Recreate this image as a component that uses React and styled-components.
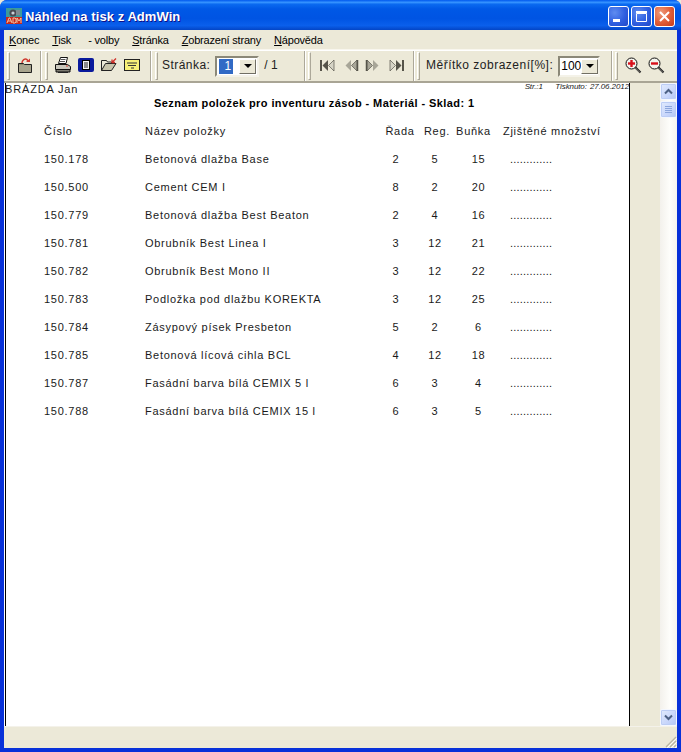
import React from 'react';
import styled, { createGlobalStyle } from 'styled-components';

const GlobalStyle = createGlobalStyle`
    html, body {
        margin: 0;
        padding: 0;
        background: #ece9d8;
    }
    #root {
        width: 681px;
        height: 752px;
    }
`;

const Window = styled.div`
    box-sizing: border-box;
    width: 681px;
    height: 752px;
    display: flex;
    flex-direction: column;
    overflow: hidden;
    background: #0831d9;
    border-radius: 7px 7px 0 0;
    font-family: "Liberation Sans", Arial, sans-serif;
`;

const TitleBar = styled.div`
    flex: none;
    height: 30px;
    box-sizing: border-box;
    padding: 2px 6px 0 6px;
    display: flex;
    align-items: center;
    gap: 3px;
    background: linear-gradient(180deg, #0058ee 0%, #3593ff 8%, #0a6af0 14%, #0058e6 30%, #0054e3 62%, #0a5fec 85%, #0345c6 100%);
`;

const TitleText = styled.div`
    flex: 1;
    font-size: 13px;
    font-weight: bold;
    letter-spacing: 0.06px;
    color: #ffffff;
    text-shadow: 1px 1px 0 #0f1089;
    white-space: nowrap;
`;

const CaptionButton = styled.div`
    box-sizing: border-box;
    width: 21px;
    height: 21px;
    margin-left: -1px;
    margin-top: 1px;
    border: 1px solid #ffffff;
    border-radius: 3px;
    display: flex;
    align-items: center;
    justify-content: center;
    background: ${p => p.$close
        ? 'radial-gradient(circle at 30% 30%, #ee9c7c 0%, #e2603a 50%, #c43a18 100%)'
        : 'radial-gradient(circle at 30% 30%, #5f8cf0 0%, #2f5fe0 55%, #2048c8 100%)'};
`;

const Body = styled.div`
    flex: 1;
    min-height: 0;
    margin: 0 4px 4px;
    display: flex;
    flex-direction: column;
    background: #ece9d8;
`;

const MenuBar = styled.div`
    flex: none;
    box-sizing: border-box;
    height: 20px;
    display: flex;
    align-items: center;
    padding-left: 5px;
    font-size: 11px;
    letter-spacing: -0.2px;
    color: #000000;
    border-bottom: 1px solid #f8f6ee;
`;

const MenuItem = styled.span`
    margin-right: ${p => p.$gap}px;
    white-space: nowrap;
    u {
        text-underline-offset: 1px;
    }
`;

const ToolBar = styled.div`
    flex: none;
    height: 33px;
    box-sizing: border-box;
    display: flex;
    align-items: center;
    font-size: 12px;
    color: #222222;
    border-bottom: 2px solid #a9a595;
    border-top: 1px solid #ffffff;
`;

const Group = styled.div`
    box-sizing: border-box;
    height: 30px;
    width: ${p => p.$width}px;
    flex: none;
    padding-left: ${p => p.$pad}px;
    display: flex;
    align-items: center;
    gap: ${p => p.$gap || 0}px;
    border-right: 1px solid #ffffff;
    box-shadow: inset -1px 0 0 #aca899;
    svg {
        margin-top: -2px;
    }
    &:last-child {
        border-right: none;
        box-shadow: none;
    }
`;

const Grip = styled.div`
    flex: none;
    box-sizing: border-box;
    width: 3px;
    height: 28px;
    margin-right: ${p => p.$after}px;
    border: 1px solid #aca899;
    border-left-color: #ffffff;
    border-top-color: #ffffff;
`;

const ToolLabel = styled.span`
    margin-top: -2px;
    letter-spacing: ${p => p.$spacing}px;
    margin-left: ${p => p.$left || 0}px;
    white-space: nowrap;
`;

const Spin = styled.div`
    box-sizing: border-box;
    flex: none;
    width: ${p => p.$width}px;
    height: 21px;
    margin-left: ${p => p.$left}px;
    display: flex;
    align-items: center;
    padding: 1px;
    background: #ffffff;
    border: 2px solid;
    border-color: #8b8878 #f4f2e8 #f4f2e8 #8b8878;
    font-size: 12px;
    letter-spacing: 0;
    color: #000000;
`;

const SpinValue = styled.span`
    flex: 1;
    padding: 0 0 0 ${p => p.$pad}px;
`;

const Selected = styled.span`
    display: block;
    width: 14px;
    height: 15px;
    line-height: 15px;
    text-align: right;
    padding-right: 2px;
    box-sizing: border-box;
    background: #316ac5;
    color: #ffffff;
`;

const SpinArrow = styled.div`
    flex: none;
    box-sizing: border-box;
    width: 17px;
    height: 15px;
    background: #ece9d8;
    border: 1px solid;
    border-color: #ffffff #716f64 #716f64 #ffffff;
    display: flex;
    align-items: center;
    justify-content: center;
    &::after {
        content: '';
        border-left: 4px solid transparent;
        border-right: 4px solid transparent;
        border-top: 4px solid #000000;
    }
`;

const Main = styled.div`
    flex: 1;
    min-height: 0;
    display: flex;
`;

const Page = styled.div`
    box-sizing: border-box;
    width: 625px;
    margin-left: 1px;
    flex: none;
    background: #ffffff;
    border-left: 1px solid #000000;
    border-right: 1px solid #000000;
    box-shadow: -1px 0 0 #ffffff;
    font-size: 11px;
    letter-spacing: 0.72px;
    color: #1a1a1a;
`;

const PageTop = styled.div`
    height: 12px;
    display: flex;
    justify-content: space-between;
    line-height: 12px;
`;

const Author = styled.span`
    letter-spacing: 0.85px;
    margin-left: -1px;
`;

const Stamp = styled.span`
    font-size: 8px;
    font-style: italic;
    letter-spacing: -0.1px;
    word-spacing: 1px;
    white-space: pre;
    line-height: 8px;
`;

const Heading = styled.div`
    margin-top: 1px;
    height: 14px;
    line-height: 14px;
    padding-left: 148px;
    font-weight: bold;
    letter-spacing: 0.42px;
    color: #000000;
`;

const Table = styled.div`
    margin-top: 7px;
    display: grid;
    grid-template-columns: 38px 101px 231px 40px 38px 49px 1fr;
    grid-auto-rows: 28px;
    align-items: center;
`;

const Cell = styled.div`
    grid-column: ${p => p.$col};
    text-align: ${p => p.$center ? 'center' : 'left'};
    white-space: nowrap;
    margin-left: ${p => p.$shift || 0}px;
`;

const Dots = styled(Cell)`
    letter-spacing: 0.2px;
`;

const Side = styled.div`
    flex: 1;
    display: flex;
    justify-content: flex-end;
`;

const ScrollBar = styled.div`
    width: 17px;
    display: flex;
    flex-direction: column;
    background: linear-gradient(90deg, #f3f1ec 0%, #fefefb 60%, #f6f5ef 100%);
`;

const ScrollTrack = styled.div`
    flex: 1;
`;

const ScrollButton = styled.div`
    flex: none;
    box-sizing: border-box;
    width: 17px;
    height: 17px;
    display: flex;
    align-items: center;
    justify-content: center;
    border: 1px solid #f4f7fe;
    border-radius: 2px;
    background: linear-gradient(135deg, #e2ebfd 0%, #c8d6fb 60%, #b3c6f4 100%);
    box-shadow: inset 0 0 0 1px #bccdf5;
`;

const ScrollThumb = styled(ScrollButton)`
    height: 17px;
    margin-top: 1px;
    flex-direction: column;
    gap: 1px;
    i {
        display: block;
        width: 7px;
        height: 1px;
        background: #8ca6dc;
    }
`;

const StatusBar = styled.div`
    flex: none;
    height: 21px;
    border-top: 1px solid #f4f2ea;
    display: flex;
    justify-content: flex-end;
    align-items: flex-end;
`;

const rows = [
    ['150.178', 'Betonová dlažba Base', 2, 5, 15],
    ['150.500', 'Cement CEM I', 8, 2, 20],
    ['150.779', 'Betonová dlažba Best Beaton', 2, 4, 16],
    ['150.781', 'Obrubník Best Linea I', 3, 12, 21],
    ['150.782', 'Obrubník Best Mono II', 3, 12, 22],
    ['150.783', 'Podložka pod dlažbu KOREKTA', 3, 12, 25],
    ['150.784', 'Zásypový písek Presbeton', 5, 2, 6],
    ['150.785', 'Betonová lícová cihla BCL', 4, 12, 18],
    ['150.787', 'Fasádní barva bílá CEMIX 5 l', 6, 3, 4],
    ['150.788', 'Fasádní barva bílá CEMIX 15 l', 6, 3, 5],
];

const AppIcon = () => (
    <svg width="16" height="16" viewBox="0 0 16 16">
        <rect width="16" height="16" fill="#3c9a9c" />
        <circle cx="7" cy="5" r="3.6" fill="#4a4a52" />
        <circle cx="7" cy="5" r="1.6" fill="#c8d0d8" />
        <rect x="10" y="2" width="4" height="5" fill="#7f8a90" />
        <rect y="9" width="16" height="7" fill="#c8281c" />
        <path d="M1 15 3 10h1l2 5M2 13h3M7 10v5h2l1-1v-3l-1-1zM11 15v-5l2 3 2-3v5" fill="none" stroke="#f4d0b0" strokeWidth="0.9" />
    </svg>
);

const ExitIcon = () => (
    <svg width="16" height="16" viewBox="0 0 16 16">
        <path d="M1.5 6.5h5l1 1h7v8h-13z" fill="#8f8a72" stroke="#222" />
        <path d="M2 8h12v7H2z" fill="#a8a48e" />
        <path d="M5 6c0-3 3-5 5-3.500l1 2" fill="none" stroke="#d03a30" strokeWidth="1.5" />
        <path d="M9 5h4V1.500z" fill="#d03a30" />
    </svg>
);

const PrintIcon = () => (
    <svg width="16" height="16" viewBox="0 0 16 16">
        <path d="M5.500.5h7l-1.500 6H3.500z" fill="#fff" stroke="#111" />
        <path d="M5.500 2.500h5M5 4.500h5" stroke="#555" />
        <path d="M.5 7.500h12l3 2v3H.5z" fill="#c8c6bc" stroke="#111" />
        <path d="M1 12.500h14V15H1z" fill="#7c7a70" stroke="#111" />
        <path d="M3 15.500h10" stroke="#222" />
        <path d="M11 9h2" stroke="#d03a30" />
    </svg>
);

const PageIcon = () => (
    <svg width="16" height="14" viewBox="0 0 16 14">
        <rect x="0" y="0" width="16" height="14" rx="2" fill="#0a1a9c" />
        <rect x="4.500" y="2.500" width="7" height="9" fill="#f4f4f4" stroke="#000" />
        <path d="M6 5h4M6 7h4M6 9h4" stroke="#222" />
    </svg>
);

const OpenIcon = () => (
    <svg width="16" height="14" viewBox="0 0 16 14">
        <path d="M.5 2.500h5l1 1.500h4v2" fill="#ece9d8" stroke="#222" />
        <path d="M.5 2.500v10h10l4.500-7H4.500l-4 7" fill="#c8c4ac" stroke="#222" />
        <path d="M15 .5l-4 4M11 1.500v3h3" fill="none" stroke="#d0302a" strokeWidth="1.300" />
    </svg>
);

const NoteIcon = () => (
    <svg width="16" height="12" viewBox="0 0 16 12">
        <rect x="0.500" y="0.500" width="15" height="11" fill="#f8f078" stroke="#222" />
        <path d="M3 4h10M4 6.500h8M7 9h3" stroke="#333" />
    </svg>
);

const NavIcon = ({ flip, outer }) => (
    <svg width="17" height="13" viewBox="0 0 17 13" style={{ transform: flip ? 'scaleX(-1)' : 'none' }}>
        {outer && <path d="M2 1v11" stroke="#56544a" strokeWidth="2" />}
        <path d="M9 1 3.500 6.500 9 12z" fill={outer ? '#56544a' : '#a8a698'} />
        <path d="M15 1 9.500 6.500 15 12z" fill={outer ? '#d6d4c6' : '#a8a698'} stroke="#56544a" strokeWidth="0.700" />
        {!outer && <path d="M15.500 1v11" stroke="#56544a" strokeWidth="1.500" />}
    </svg>
);

const ZoomIcon = ({ minus }) => (
    <svg width="17" height="17" viewBox="0 0 17 17">
        <path d="M10 10l5.500 5.500" stroke="#222" strokeWidth="2.200" />
        <path d="M10.500 11l4.500 4.500" stroke="#b8b6a8" strokeWidth="0.700" />
        <circle cx="6.500" cy="6.500" r="5.500" fill="#f4f4ee" stroke="#111" />
        <rect x="3" y="5.300" width="7" height="2.400" fill="#d8101c" />
        {!minus && <rect x="5.300" y="3" width="2.400" height="7" fill="#d8101c" />}
    </svg>
);

const Chevron = ({ down }) => (
    <svg width="9" height="7" viewBox="0 0 9 7">
        <path d={down ? 'M1 1.500l3.500 3.500L8 1.500' : 'M1 5.500L4.500 2 8 5.500'} fill="none" stroke="#4d6185" strokeWidth="2" />
    </svg>
);

const SizeGrip = () => (
    <svg width="13" height="13" viewBox="0 0 13 13">
        <path d="M12 2 2 12M12 6l-6 6M12 10l-2 2" stroke="#b8b4a2" strokeWidth="1.200" />
        <path d="M13 3 3 13M13 7l-6 6M13 11l-2 2" stroke="#ffffff" strokeWidth="0.800" />
    </svg>
);

const App = () => (
    <Window>
        <GlobalStyle />
        <TitleBar>
            <AppIcon />
            <TitleText>Náhled na tisk z AdmWin</TitleText>
            <CaptionButton>
                <svg width="13" height="13" viewBox="0 0 13 13"><rect x="1" y="9" width="7" height="3" fill="#fff" /></svg>
            </CaptionButton>
            <CaptionButton>
                <svg width="13" height="13" viewBox="0 0 13 13"><path d="M1.500 3.500h10v8h-10z" fill="none" stroke="#fff" /><rect x="1" y="1" width="11" height="2" fill="#fff" /></svg>
            </CaptionButton>
            <CaptionButton $close>
                <svg width="13" height="13" viewBox="0 0 13 13"><path d="M2 2l9 9M11 2l-9 9" stroke="#fff" strokeWidth="2" /></svg>
            </CaptionButton>
        </TitleBar>
        <Body>
            <MenuBar>
                <MenuItem $gap={13}><u>K</u>onec</MenuItem>
                <MenuItem $gap={17}><u>T</u>isk</MenuItem>
                <MenuItem $gap={13}>- volby</MenuItem>
                <MenuItem $gap={13}><u>S</u>tránka</MenuItem>
                <MenuItem $gap={13}><u>Z</u>obrazení strany</MenuItem>
                <MenuItem $gap={0}><u>N</u>ápověda</MenuItem>
            </MenuBar>
            <ToolBar>
                <Group $width={38} $pad={3}>
                    <Grip $after={7} />
                    <ExitIcon />
                </Group>
                <Group $width={110} $pad={3} $gap={7}>
                    <Grip $after={0} />
                    <PrintIcon />
                    <PageIcon />
                    <OpenIcon />
                    <NoteIcon />
                </Group>
                <Group $width={154} $pad={3}>
                    <Grip $after={4} />
                    <ToolLabel $spacing={0.45}>Stránka:</ToolLabel>
                    <Spin $width={44} $left={5}>
                        <SpinValue $pad={1}><Selected>1</Selected></SpinValue>
                        <SpinArrow />
                    </Spin>
                    <ToolLabel $spacing={0} $left={5}>/ 1</ToolLabel>
                </Group>
                <Group $width={109} $pad={2} $gap={6}>
                    <Grip $after={2} />
                    <NavIcon outer />
                    <NavIcon />
                    <NavIcon flip />
                    <NavIcon flip outer />
                </Group>
                <Group $width={198} $pad={2}>
                    <Grip $after={6} />
                    <ToolLabel $spacing={0.5}>Měřítko zobrazení[%]:</ToolLabel>
                    <Spin $width={42} $left={5}>
                        <SpinValue $pad={0}>100</SpinValue>
                        <SpinArrow />
                    </Spin>
                </Group>
                <Group $width={60} $pad={2} $gap={6}>
                    <Grip $after={1} />
                    <ZoomIcon />
                    <ZoomIcon minus />
                </Group>
            </ToolBar>
            <Main>
                <Page>
                    <PageTop>
                        <Author>BRÁZDA Jan</Author>
                        <Stamp>{'Str.:1    Tisknuto: 27.06.2012'}</Stamp>
                    </PageTop>
                    <Heading>Seznam položek pro inventuru zásob - Materiál - Sklad: 1</Heading>
                    <Table>
                        <Cell $col={2}>Číslo</Cell>
                        <Cell $col={3}>Název položky</Cell>
                        <Cell $col={4} $center $shift={8}>Řada</Cell>
                        <Cell $col={5} $center $shift={4}>Reg.</Cell>
                        <Cell $col={6} $center $shift={-10}>Buňka</Cell>
                        <Cell $col={7}>Zjištěné množství</Cell>
                        {rows.map(([code, name, row, reg, cell]) => (
                            <React.Fragment key={code}>
                                <Cell $col={2}>{code}</Cell>
                                <Cell $col={3}>{name}</Cell>
                                <Cell $col={4} $center>{row}</Cell>
                                <Cell $col={5} $center>{reg}</Cell>
                                <Cell $col={6} $center>{cell}</Cell>
                                <Dots $col={7} $shift={7}>.............</Dots>
                            </React.Fragment>
                        ))}
                    </Table>
                </Page>
                <Side>
                    <ScrollBar>
                        <ScrollButton><Chevron /></ScrollButton>
                        <ScrollThumb><i /><i /><i /><i /></ScrollThumb>
                        <ScrollTrack />
                        <ScrollButton><Chevron down /></ScrollButton>
                    </ScrollBar>
                </Side>
            </Main>
            <StatusBar>
                <SizeGrip />
            </StatusBar>
        </Body>
    </Window>
);

export default App;
